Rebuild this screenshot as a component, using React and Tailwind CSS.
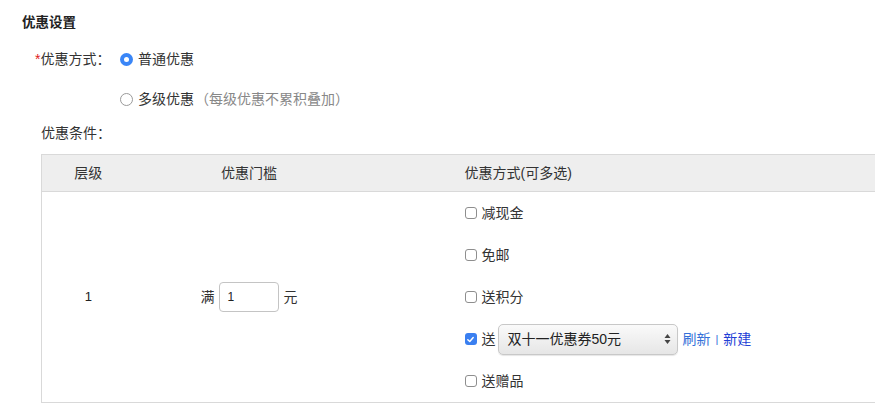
import React from "react";

const font = { fontFamily: '"Liberation Sans", "Noto Sans CJK SC", sans-serif' };

function Radio({ checked }) {
  return checked ? (
    <span className="w-[13px] h-[13px] rounded-full bg-[#3a86f7] flex items-center justify-center shrink-0">
      <span className="w-[5px] h-[5px] rounded-full bg-white" />
    </span>
  ) : (
    <span className="w-[13px] h-[13px] rounded-full border border-[#9a9a9a] bg-white shrink-0" />
  );
}

function Check({ checked }) {
  return checked ? (
    <span className="w-[12px] h-[12px] rounded-[3px] bg-[#3a7ff0] flex items-center justify-center shrink-0">
      <svg width="9" height="9" viewBox="0 0 10 10" fill="none">
        <path d="M2 5.2 L4.2 7.3 L8 2.8" stroke="white" strokeWidth="1.6" strokeLinecap="round" strokeLinejoin="round" />
      </svg>
    </span>
  ) : (
    <span className="w-[12px] h-[12px] rounded-[3px] border border-[#8e8e8e] bg-white shrink-0" />
  );
}

function Option({ children, checked }) {
  return (
    <div className="h-[42px] flex items-center gap-[5px]">
      <Check checked={checked} />
      {children}
    </div>
  );
}

export default function App() {
  return (
    <div className="bg-white w-[875px] h-[408px] overflow-hidden text-[14px] text-[#333]" style={font}>
      <div className="pl-[22px] pt-[14px] h-[32px] leading-[18px] text-[13.5px] font-bold text-[#222]">优惠设置</div>

      <div className="flex mt-[7px] h-[40px] items-center">
        <div className="w-[120px] pl-[35px] shrink-0">
          <span className="text-[#e02020]">*</span>优惠方式：
        </div>
        <div className="flex items-center gap-[5px]">
          <Radio checked />
          <span>普通优惠</span>
        </div>
      </div>
      <div className="flex h-[40px] items-center">
        <div className="w-[120px] shrink-0" />
        <div className="flex items-center gap-[5px]">
          <Radio />
          <span>多级优惠</span>
          <span className="text-[#888] -ml-[4px]">（每级优惠不累积叠加）</span>
        </div>
      </div>
      <div className="flex h-[28px] items-center">
        <div className="pl-[41px]">优惠条件：</div>
      </div>

      <div className="ml-[41px] mt-[7px] w-[900px]">
        <table className="border-collapse w-full">
          <thead>
            <tr className="bg-[#eeeeee] h-[37px]">
              <th className="border-l border-y border-[#d9d9d9] font-normal w-[93px] text-center">层级</th>
              <th className="border-y border-[#d9d9d9] font-normal w-[229px] text-center">优惠门槛</th>
              <th className="border-y border-[#d9d9d9] font-normal text-left pl-[101px]">优惠方式(可多选)</th>
            </tr>
          </thead>
          <tbody>
            <tr>
              <td className="border-l border-y border-[#d9d9d9] text-center align-middle h-[211px] text-[13px] text-[#222]">1</td>
              <td className="border-y border-[#d9d9d9] align-middle">
                <div className="flex items-center justify-center">
                  <span>满</span>
                  <div className="ml-[4px] w-[60px] h-[30px] border border-[#c4c4c4] rounded-[4px] flex items-center pl-[8px] text-[12px] text-[#222]">1</div>
                  <span className="ml-[5px]">元</span>
                </div>
              </td>
              <td className="border-y border-[#d9d9d9] align-top pl-[101px]">
                <Option>减现金</Option>
                <Option>免邮</Option>
                <Option>送积分</Option>
                <Option checked>
                  <span>送</span>
                  <div className="-ml-[3px] w-[180px] h-[31px] rounded-[5px] border border-[#c8c8c8] bg-gradient-to-b from-[#fafafa] to-[#e6e6e6] shadow-[0_1px_1px_rgba(0,0,0,0.1)] flex items-center justify-between pl-[9px] pr-[6px] text-[#222]">
                    <span>双十一优惠券50元</span>
                    <svg width="7" height="12" viewBox="0 0 7 12">
                      <path d="M3.5 1 L6.5 5 H0.5 Z" fill="#444" />
                      <path d="M3.5 11 L6.5 7 H0.5 Z" fill="#444" />
                    </svg>
                  </div>
                  <span className="text-[#3470d8]">刷新</span>
                  <span className="text-[#3470d8] text-[11px]">|</span>
                  <span className="text-[#1f3fd6]">新建</span>
                </Option>
                <Option>送赠品</Option>
              </td>
            </tr>
          </tbody>
        </table>
      </div>
    </div>
  );
}
